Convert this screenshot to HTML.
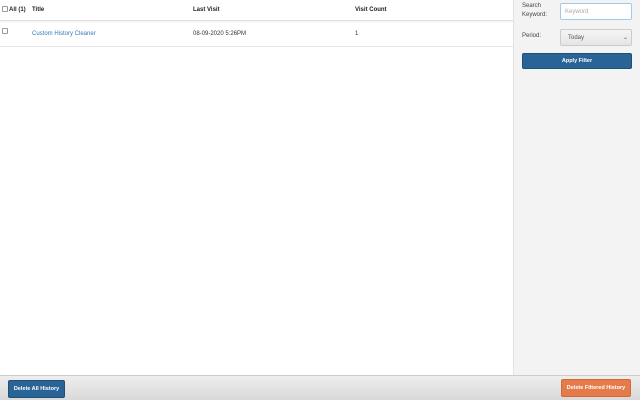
<!DOCTYPE html>
<html><head><style>
*{box-sizing:border-box;margin:0;padding:0}
body{width:640px;height:400px;overflow:hidden;font-family:"Liberation Sans",sans-serif;font-size:6px;color:#333;background:#fff;position:relative}
.abs{position:absolute}
.side{left:513px;top:0;width:127px;height:376px;background:#f3f3f3;border-left:1px solid #e2e2e2}
.hdr{left:0;top:0;width:513px;height:21px;border-bottom:1px solid #ddd;box-shadow:0 1px 2px rgba(0,0,0,.06)}
.row{left:0;top:21px;width:513px;height:26px;border-bottom:1px solid #e5e5e5}
.cb{width:6px;height:6px;border:1px solid #999;border-radius:1px;background:#fff;display:inline-block}
b{font-weight:bold;color:#222}
.footer{left:0;top:375px;width:640px;height:25px;background:linear-gradient(#eeeeee,#d9d9d9);border-top:1px solid #ccc}
.btn{color:#fff;font-weight:bold;text-align:center;border-radius:2px;font-size:5.5px}
</style></head><body>
<div class="abs hdr"></div>
<div class="abs row"></div>
<div class="abs" style="left:2px;top:6px"><span class="cb"></span></div>
<div class="abs" style="left:9px;top:7px"><b>All (1)</b></div>
<div class="abs" style="left:32px;top:7px"><b>Title</b></div>
<div class="abs" style="left:193px;top:7px"><b>Last Visit</b></div>
<div class="abs" style="left:355px;top:7px"><b>Visit Count</b></div>
<div class="abs" style="left:2px;top:28px"><span class="cb"></span></div>
<div class="abs" style="left:32px;top:31px;color:#337ab7">Custom History Cleaner</div>
<div class="abs" style="left:193px;top:31px;color:#333">08-09-2020 5:26PM</div>
<div class="abs" style="left:355px;top:31px">1</div>
<div class="abs side"></div>
<div class="abs" style="left:522px;top:2px;line-height:9px;color:#444">Search<br>Keyword:</div>
<div class="abs" style="left:560px;top:3px;width:72px;height:17px;border:1px solid #9ecaed;background:#fff;border-radius:2px;color:#aaa;padding:5px 0 0 4px">Keyword</div>
<div class="abs" style="left:522px;top:33px;color:#444">Period:</div>
<div class="abs" style="left:560px;top:29px;width:72px;height:17px;border:1px solid #ccc;background:linear-gradient(#f5f5f5,#e5e5e5);border-radius:2px;color:#555;padding:5px 0 0 7px">Today<span style="position:absolute;right:3px;top:4px">&#8964;</span></div>
<div class="abs btn" style="left:522px;top:53px;width:110px;height:16px;background:#2a6496;border:1px solid #1f4e76;padding-top:4px">Apply Filter</div>
<div class="abs footer"></div>
<div class="abs btn" style="left:8px;top:380px;width:57px;height:18px;background:#2a6496;border:1px solid #1f4e76;padding-top:5px">Delete All History</div>
<div class="abs btn" style="left:561px;top:379px;width:70px;height:18px;background:#e57b4a;border:1px solid #d06a3c;padding-top:5px">Delete Filtered History</div>
</body></html>
